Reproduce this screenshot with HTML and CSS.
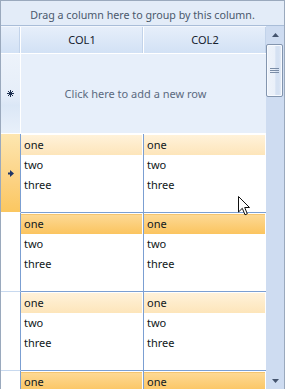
FILE: index.html
```html
<!DOCTYPE html>
<html lang="en">
<head>
  <meta charset="UTF-8" />
  <title>Grid</title>
  <link rel="stylesheet" href="styles.css">
</head>
<body>

  <div class="grid">
    <div class="group-panel">Drag a column here to group by this column.</div>

    <div class="body">
      <div class="main">
        <div class="header">
          <div class="hcell ind-col"></div>
          <div class="hcell col">COL1</div>
          <div class="hcell col last">COL2</div>
        </div>

        <!-- new row placeholder -->
        <div class="new-row">
          <div class="ind new-ind">
            <svg width="7" height="7" viewBox="0 0 7 7">
              <g stroke="#1d2f4f" stroke-width="1">
                <line x1="3.5" y1="0" x2="3.5" y2="7" />
                <line x1="0" y1="3.5" x2="7" y2="3.5" />
                <line x1="1" y1="1" x2="6" y2="6" />
                <line x1="6" y1="1" x2="1" y2="6" />
              </g>
            </svg>
          </div>
          <div class="new-text">Click here to add a new row</div>
        </div>

        <div class="row current">
          <div class="ind">
            <svg width="6" height="7" viewBox="0 0 6 7">
              <polygon points="0,2.5 2,2.5 2,0 6,3.5 2,7 2,4.5 0,4.5" fill="#1f3566" />
            </svg>
          </div>
          <div class="cell">
            <div class="line hl-light">one</div>
            <div class="line">two</div>
            <div class="line">three</div>
          </div>
          <div class="cell last">
            <div class="line hl-light">one</div>
            <div class="line">two</div>
            <div class="line">three</div>
          </div>
        </div>

        <div class="row">
          <div class="ind"></div>
          <div class="cell">
            <div class="line hl-dark">one</div>
            <div class="line">two</div>
            <div class="line">three</div>
          </div>
          <div class="cell last">
            <div class="line hl-dark">one</div>
            <div class="line">two</div>
            <div class="line">three</div>
          </div>
        </div>

        <div class="row">
          <div class="ind"></div>
          <div class="cell">
            <div class="line hl-light">one</div>
            <div class="line">two</div>
            <div class="line">three</div>
          </div>
          <div class="cell last">
            <div class="line hl-light">one</div>
            <div class="line">two</div>
            <div class="line">three</div>
          </div>
        </div>

        <div class="row">
          <div class="ind"></div>
          <div class="cell">
            <div class="line hl-dark">one</div>
            <div class="line">two</div>
            <div class="line">three</div>
          </div>
          <div class="cell last">
            <div class="line hl-dark">one</div>
            <div class="line">two</div>
            <div class="line">three</div>
          </div>
        </div>
      </div>

      <div class="scrollbar">
        <div class="sb-btn">
          <svg width="7" height="4" viewBox="0 0 7 4"><polygon points="3.5,0 7,4 0,4" fill="#44546e" /></svg>
        </div>
        <div class="thumb">
          <div class="grip"></div>
          <div class="grip"></div>
          <div class="grip"></div>
        </div>
        <div class="sb-track"></div>
        <div class="sb-btn">
          <svg width="7" height="4" viewBox="0 0 7 4"><polygon points="0,0 7,0 3.5,4" fill="#44546e" /></svg>
        </div>
      </div>
    </div>

    <!-- mouse pointer -->
    <svg class="cursor" width="13" height="20" viewBox="0 0 13 20">
      <polygon points="0.5,0.5 0.5,16 4.3,12.3 7,18.8 9.3,17.8 6.7,11.5 11.5,11.5" fill="#fff" stroke="#111" stroke-width="1" />
    </svg>
  </div>

</body>
</html>
```

FILE: styles.css
```css
body {
  margin: 0;
  font-family: 'Noto Sans', 'DejaVu Sans', sans-serif;
  font-size: 11px;
  color: #111;
  background: #fff;
}

.grid {
  position: relative;
  width: 285px;
  height: 389px;
  box-sizing: border-box;
  border: 1px solid #9aa9bd;
  border-bottom: none;
  overflow: hidden;
  display: flex;
  flex-direction: column;
}

.group-panel {
  height: 25px;
  flex: none;
  box-sizing: border-box;
  padding-top: 6px;
  line-height: 16px;
  font-size: 10.7px;
  text-align: center;
  color: #4a586c;
  background: #e3ecf8;
  border-bottom: 1px solid #a9bdd8;
}

.body {
  flex: 1;
  display: flex;
  min-height: 0;
}

.main {
  width: 265px;
  flex: none;
  display: flex;
  flex-direction: column;
  background: #fff;
}

.header {
  display: flex;
  height: 28px;
  flex: none;
  box-sizing: border-box;
  border-top: 1px solid #f3f7fd;
  border-bottom: 1px solid #fff;
  background: linear-gradient(to bottom, #e6eefa, #d2e1f5);
}

.hcell {
  box-sizing: border-box;
  line-height: 26px;
  text-align: center;
  color: #15202e;
  border-right: 1px solid #fff;
  box-shadow: inset -1px 0 0 #c2d3ea;
}

.hcell.ind-col {
  width: 20px;
}

.hcell.col {
  width: 123px;
}

.hcell.col.last {
  width: 122px;
  border-right: none;
}

.new-row {
  display: flex;
  height: 80px;
  flex: none;
  box-sizing: border-box;
  border-bottom: 1px solid #fff;
}

.ind {
  width: 20px;
  flex: none;
  box-sizing: border-box;
  display: flex;
  align-items: center;
  justify-content: center;
  border-right: 1px solid #7b9fd2;
  border-bottom: 1px solid #c8d9ef;
}

.new-ind {
  border-right: 1px solid #fff;
  border-bottom: none;
  background: linear-gradient(to bottom, #edf3fb 0%, #e6eef9 50%, #dbe7f6 65%, #e8f0fa 100%);
}

.new-text {
  flex: 1;
  display: flex;
  align-items: center;
  justify-content: center;
  padding-right: 16px;
  color: #5b6a80;
  background: #e7effa;
}

.row {
  display: flex;
  height: 79px;
  flex: none;
}

.row.current .ind {
  background: linear-gradient(to bottom, #fde6b0, #fcd282 60%, #fbc760);
  border-bottom-color: #fff;
}

.cell {
  width: 123px;
  flex: none;
  box-sizing: border-box;
  padding-top: 1px;
  border-right: 1px solid #7b9fd2;
  border-bottom: 1px solid #7b9fd2;
}

.cell.last {
  width: 122px;
  border-right: none;
}

.line {
  height: 20px;
  line-height: 20px;
  padding-left: 3px;
  margin-right: 1px;
  color: #101820;
}

.hl-light {
  background: linear-gradient(to bottom, #fff2da, #fde5ba);
}

.hl-dark {
  background: linear-gradient(to bottom, #fdda97, #fbc45f);
  box-shadow: inset 0 1px 0 #f4c56f;
}

.scrollbar {
  width: 18px;
  flex: none;
  display: flex;
  flex-direction: column;
  background: #cedcf1;
}

.sb-btn {
  height: 17px;
  flex: none;
  display: flex;
  align-items: center;
  justify-content: center;
}

.thumb {
  height: 53px;
  flex: none;
  margin: 1px 1px 0 0;
  box-sizing: border-box;
  border: 1px solid #8395ae;
  border-radius: 2px;
  box-shadow: inset 0 0 0 1px #f7faff;
  background: linear-gradient(to right, #eef3fa 0%, #eaf0f9 50%, #d5e1f2 60%, #d5e1f2 80%, #eaf0f9 100%);
  display: flex;
  flex-direction: column;
  align-items: center;
  justify-content: center;
  gap: 1px;
}

.grip {
  width: 9px;
  height: 1px;
  background: #7a8ca6;
}

.sb-track {
  flex: 1;
}

.cursor {
  position: absolute;
  left: 237px;
  top: 195px;
}
```
